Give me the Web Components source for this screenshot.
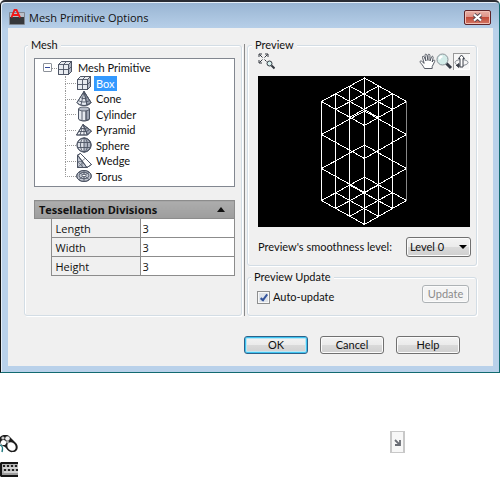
<!DOCTYPE html>
<html lang="en">
<head>
<meta charset="utf-8">
<title>Mesh Primitive Options</title>
<style>
body{margin:0;background:#fff;color:#111;font:11px/14px Lato,"Liberation Sans",Arial,sans-serif}
</style>
</head>
<body>
<mesh-page></mesh-page>
<script>
const define=(name,html,setup)=>customElements.define(name,class extends HTMLElement{
  constructor(){super();this.attachShadow({mode:'open'}).innerHTML=html;}
  connectedCallback(){if(setup)setup(this,this.shadowRoot);}
});

const cube='<path d="M1.500 4.500 4.500 1.500h10v10l-3 3h-10z" fill="#e8ebf0"/><path d="M11.500 4.500l3-3v10l-3 3z" fill="#aeb4c1"/><path d="M1.500 4.500 4.500 1.500h10v10l-3 3h-10zM1.500 4.500h10l3-3M11.500 4.500v10M6.500 14.500v-10l3-3M1.500 9.500h10l3-3"/>';
const ICONS={
 cube,
 cone:'<path d="M8 .5 1 11.5c1 2 4 3 7 3s6-1 7-3z" fill="#e4e8ef"/><path d="M8 .5 11 14l4-2.5z" fill="#9aa1b0"/><path d="M8 .5 1 11.5c1 2 4 3 7 3s6-1 7-3L8 .5 5 14M8 .5 11 14M4.500 6.500c2 1.500 5 1.500 7 0M2.500 9.500c3 2 8 2 11 0"/>',
 cylinder:'<path d="M2.500 3v10c2 2.500 9 2.500 11 0V3z" fill="#e4e8ef"/><path d="M10 4.500v10l3.500-1.500V3z" fill="#9aa1b0"/><ellipse cx="8" cy="3" rx="5.500" ry="2" fill="#b9bfca"/><path d="M2.500 3v10c2 2.500 9 2.500 11 0V3M6 5v9.500M10 5v9.500"/>',
 pyramid:'<path d="M7 2.500.5 13h11z" fill="#eef0f4"/><path d="M7 2.500 11.500 13l4-4z" fill="#9aa1b0"/><path d="M7 2.500.5 13h11l4-4zL11.500 13M4.500 6.500h5l2-1M2.500 9.500h8l3-2M6 6.500 4 13M8 6.500V13"/>',
 sphere:'<circle cx="8" cy="8" r="7" fill="#dfe3ea"/><path d="M8 1a7 7 0 0 1 0 14z" fill="#b0b6c3"/><circle cx="8" cy="8" r="7"/><ellipse cx="8" cy="8" rx="3.500" ry="7"/><path d="M1.500 5.500h13M1.500 10.500h13"/>',
 wedge:'<path d="M1.500 2v12.500H11z" fill="#c1c6d1"/><path d="M1.500 2 4.500.5l11 11-4.500 3z" fill="#fff"/><path d="M1.500 2v12.500H11zM1.500 2l3-1.500 11 11-4.500 3"/><path d="M1.500 8.500H6M6 8v6.500M1.500 14.500l6-5.500M1.500 8.500l6 6M6 8l3-2.500" stroke-width=".6"/>',
 torus:'<ellipse cx="8" cy="8" rx="7.300" ry="5.500" fill="#c4c9d3"/><ellipse cx="8" cy="8" rx="7.300" ry="5.500"/><ellipse cx="8" cy="7.500" rx="4.800" ry="3.200"/><ellipse cx="8" cy="7.500" rx="2" ry="1.200" fill="#fff"/><path d="M8 2.500v3.500M8 9v4.500M3 4.500l3.500 2M13 4.500l-3.500 2M3 11.500l3.500-3M13 11.500l-3.500-3"/>'
};
define('shape-icon','<style>:host{display:block;width:16px;height:16px}svg{display:block;fill:none;stroke:#4c5463;stroke-width:.9}</style><svg width="16" height="16" viewBox="0 0 16 16" aria-hidden="true"></svg>',
 (h,r)=>{r.querySelector('svg').innerHTML=ICONS[h.getAttribute('shape')];});

define('tree-item',`<style>
:host{flex:1;display:flex;align-items:center;min-height:0;position:relative;padding-left:41px}
:host([root]){padding-left:22px}
:host::before{content:"";position:absolute;left:30px;top:0;width:10px;height:50%;border-left:1px dotted #999;border-bottom:1px dotted #999}
:host(:not([last]))::after{content:"";position:absolute;left:30px;top:50%;bottom:0;border-left:1px dotted #999}
:host([root])::before{left:17px;width:5px;border-left:0}
:host([root])::after{display:none}
.t{margin-left:2px;padding:0 2px;line-height:15px}
:host([root]) .t{margin-left:3px}
:host([selected]) .t{background:#3399ff;color:#fff}
button{position:absolute;left:8px;top:3px;width:9px;height:9px;padding:0;border:1px solid #8c9199;border-radius:1px;background:#fff}
button::before{content:"";position:absolute;left:1px;top:3px;width:5px;height:1px;background:#334a9c}
:host(:not([root])) button{display:none}
</style><button aria-label="Collapse"></button><shape-icon></shape-icon><span class="t"><slot></slot></span>`,
 (h,r)=>{h.setAttribute('role','treeitem');r.querySelector('shape-icon').remove();
 const i=document.createElement('shape-icon');i.setAttribute('shape',h.getAttribute('icon'));r.querySelector('.t').before(i);});

define('shape-tree',`<style>:host{display:flex;flex-direction:column;box-sizing:border-box;height:129px;padding:1px 0 2px;border:1px solid #828790;background:#fff}</style><slot></slot>`,
 h=>h.setAttribute('role','tree'));

define('group-box',`<style>:host{display:block}
fieldset{box-sizing:border-box;height:100%;min-width:0;margin:0;padding:var(--pad);border:1px solid #d3dde5;border-radius:3px;box-shadow:inset 1px 1px #fff,1px 1px #fff}
legend{margin-left:-6px;padding:0 3px;background:#f0f0f0;line-height:14px}
</style><fieldset><legend><slot name="title"></slot></legend><slot></slot></fieldset>`);

define('push-button',`<style>:host{display:block}
button{box-sizing:border-box;width:var(--w,64px);height:18px;padding:0;border:1px solid #707070;border-radius:3px;background:linear-gradient(#f3f3f3,#ebebeb 48%,#dadada 50%,#cfcfcf);box-shadow:inset 0 0 0 1px #fbfbfb;color:inherit;font:inherit;line-height:14px}
:host([primary]) button{border-color:#2c628b;box-shadow:inset 0 0 0 1px #3fc4f0,inset 0 0 0 2px #b9e6f5}
:host([disabled]) button{border-color:#adb2b5;background:#f4f4f4;color:#8b8b8b}
</style><button type="button"><slot></slot></button>`,
 (h,r)=>{r.querySelector('button').disabled=h.hasAttribute('disabled');});

define('division-table',`<style>:host{display:block}
table{width:100%;border-collapse:collapse;font:11px/15px "Open Sans","Noto Sans",sans-serif}
th,td{border:1px solid #8c8c8c;padding:0;height:18px;text-align:left;font-weight:400}
thead th{height:17px;background:linear-gradient(#adadad,#9d9d9d);font:bold 11px/15px "Open Sans",sans-serif}
thead div{display:flex;align-items:center;justify-content:space-between;padding:0 9px 0 4px}
thead button{padding:0;border:0;width:8px;height:5px;background:#111;clip-path:polygon(50% 0,100% 100%,0 100%)}
tbody td:first-child{width:16px;border:0}
tbody th{width:84px;padding-left:4px}
td:last-child{background:#fff}
input{display:block;box-sizing:border-box;width:100%;height:18px;border:0;padding:0 2px;background:none;font:11px/15px "Open Sans",sans-serif;color:inherit}
</style><table><thead><tr><th colspan="3"><div>Tessellation Divisions<button aria-label="Collapse section"></button></div></th></tr></thead>
<tbody><tr><td></td><th><label for="l">Length</label></th><td><input id="l" value="3"></td></tr>
<tr><td></td><th><label for="w">Width</label></th><td><input id="w" value="3"></td></tr>
<tr><td></td><th><label for="h">Height</label></th><td><input id="h" value="3"></td></tr></tbody></table>`);

define('preview-tools',`<style>:host{display:flex;height:18px;margin-bottom:6px;align-items:center}
button{display:block;padding:0;border:0;width:17px;height:17px;background:none}
.first{margin-right:auto}.on{box-shadow:inset 1px 1px #999,inset -1px -1px #fff;background:#f7f7f7}svg{display:block}
</style>
<button class="first" aria-label="Zoom extents"><svg width="17" height="17" viewBox="0 0 17 17" fill="none" stroke="#343941"><path d="M1 4V1h3M7 1h3v3M1 7v3h3M1.500 1.500l3 3M9.500 1.500l-3 3M1.500 9.500l3-3M6.500 6.500l2 2"/><circle cx="11.500" cy="10.500" r="2.500" fill="#d6f0ef"/><path d="m13.500 12.500 3 3" stroke-width="2"/></svg></button>
<button aria-label="Pan"><svg width="17" height="17" viewBox="0 0 17 17"><path d="M5.500 15.500C4 12.500 2.500 11 1.200 9.300c-.7-1.200.8-1.700 1.700-.9l2.300 2L3.500 4.500c-.4-1.600 1.200-1.800 1.700-.5L7 8 6 2.500C5.800.8 7.500.7 7.900 2.200L9 7.500V2.300C9 .8 10.800.8 10.900 2.300L11 8l1.500-4c.5-1.300 2-.8 1.600.7L13.200 9l1-1.500c.8-1 2-.2 1.500 1l-2.500 5v2z" fill="#fff" stroke="#454b56" stroke-width=".9"/></svg></button>
<button aria-label="Zoom"><svg width="17" height="17" viewBox="0 0 17 17"><path d="m10 10 5 5" stroke="#353a45" stroke-width="3"/><circle cx="6.500" cy="6.500" r="5.500" fill="#d3ece9" stroke="#8a9298"/><path d="M3.500 6.500a3 3 0 0 1 3-3" fill="none" stroke="#fff" stroke-width="2"/></svg></button>
<button class="on" aria-label="Orbit"><svg width="17" height="17" viewBox="0 0 17 17" fill="none"><ellipse cx="8.500" cy="9.500" rx="6.500" ry="3" stroke="#858b93"/><path d="M8.500 2 11.500 5.500H10V14H7V5.500H5.500z" fill="#fff" stroke="#3c414a"/><path d="M3 12.500h3M6 10.500v4l-2.500-2z" fill="#3c414a" stroke="#3c414a"/></svg></button>`);

define('wire-preview',`<style>:host{display:flex;justify-content:center;height:151px;background:#000}svg{display:block}</style>
<svg width="86" height="151" viewBox="0 0 86 151" fill="none" stroke="#fff" shape-rendering="crispEdges" role="img" aria-label="Box preview">
<defs><path id="r" d="M.5 25.500 43.500 2l42 23.500-42 24z"/>
<path id="g" d="M.5 25.500 43.500 2M14.500 33.500l43-23.500M28.500 41.500l43-24M43.500 49.500l42-24M.5 25.500l43 24M14.500 17.500l43 24M28.500 10l43 23.500M43.500 2l42 23.500"/></defs>
<use href="#g"/><use href="#r" y="33"/><use href="#r" y="67"/><use href="#g" y="99"/>
<path d="M.5 25v100M14.500 17v116M28.500 10v131M43.500 1v148M57.500 10v131M71.500 17v116"/><path d="M85.500 25v100" stroke="#888"/></svg>`);

define('smoothness-picker',`<style>:host{display:flex;justify-content:space-between;align-items:center;margin-top:10px}
span{position:relative;display:block;margin-right:-1px}
select{appearance:none;box-sizing:border-box;display:block;width:65px;height:20px;margin:0;padding:0 3px;border:1px solid #707070;border-radius:3px;background:linear-gradient(#f3f3f3,#ebebeb 48%,#dadada 50%,#cfcfcf);box-shadow:inset 0 0 0 1px #fbfbfb;color:inherit;font:inherit}
span::after{content:"";position:absolute;right:4px;top:8px;border:4px solid transparent;border-top-color:#000;border-bottom:0;pointer-events:none}
</style><label for="s">Preview's smoothness level:</label><span><select id="s"><option>Level 0</option><option>Level 1</option><option>Level 2</option></select></span>`);

define('auto-update',`<style>:host{display:flex;justify-content:space-between;align-items:flex-start}
label{display:flex;align-items:center;gap:3px;margin-top:5px}
input{appearance:none;box-sizing:border-box;width:13px;height:13px;margin:0;border:1px solid #8e8f8f;background:#dfe4ea;box-shadow:inset 0 0 0 1px #f8f8f8;position:relative}
input:checked::after{content:"";position:absolute;left:4px;top:1px;width:2px;height:6px;border:solid #34549c;border-width:0 2px 2px 0;transform:rotate(38deg)}
</style><label><input type="checkbox" checked>Auto-update</label><push-button disabled style="--w:47px">Update</push-button>`);

define('dialog-window',`<style>:host{display:block;box-sizing:border-box;border:1px solid #111;border-bottom-color:#126a70;border-right-color:#126a70;border-top:2px solid #2a2c33;border-radius:5px 5px 0 0;background:linear-gradient(#98b4d2,#b9d1ea 28px);padding:0 6px 6px;box-shadow:inset 1px 1px #e5eef7}
header{display:flex;align-items:center;height:26px;padding:0 2px}
h1{margin:0 auto 0 4px;padding-top:5px;font:11px/16px "Open Sans","Noto Sans",sans-serif}
header svg.logo{margin-top:5px}
button{width:27px;height:15px;margin-top:4px;padding:0;border:1px solid #5e2328;border-radius:2px;background:linear-gradient(#e9b0a6,#dd9186 48%,#c24b3a 50%,#d37765);box-shadow:inset 0 0 0 1px #f0bfb5;display:flex;align-items:center;justify-content:center}
main{margin-left:1px;background:#f0f0f0;padding:10px 16px 12px}
</style><header><svg class="logo" width="16" height="17" viewBox="0 0 16 17" aria-hidden="true"><path d="M.5 3.500h15v12H.5z" fill="#b9bfc8" stroke="#80868f"/><path d="M1 8h14v7H1z" fill="#36383b"/><path d="m2.500 8.500 3-7.500h2l3.500 7.500M4 6h5.500" fill="none" stroke="#f01818" stroke-width="1.800"/></svg><h1><slot name="title"></slot></h1>
<button aria-label="Close"><svg width="11" height="9" viewBox="0 0 11 9"><path d="m2 1.500 7 6m0-6-7 6" stroke="#564850" stroke-width="4"/><path d="m2 1.500 7 6m0-6-7 6" stroke="#fff" stroke-width="2.200"/></svg></button></header><main><slot></slot></main>`);

define('page-notes',`<style>:host{display:block;margin-top:58px}
div{display:flex;justify-content:space-between;height:22px;margin-right:95px}
button{width:15px;height:22px;padding:0;border:1px solid #c8c8c8;border-width:1px 2px;background:#f7f7f7;display:flex;align-items:center;justify-content:center}
svg{display:block}.mouse{margin-top:4px}.keys{margin-top:9px}
</style><div><svg class="mouse" width="18" height="18" viewBox="0 0 18 18" aria-label="Mouse"><path d="M0 2C3-1 8-1 10 2l6 6c3 3 2 9-3 9-4 1-6-3-8-5-3-1-5-3-5-6z" fill="#1c1c1c"/><path d="M0 10c3 1 3 3 2 7" fill="none" stroke="#247c82" stroke-width="1.500"/><circle cx="3.500" cy="7.500" r="2.600" fill="#fff"/><circle cx="7.500" cy="3.500" r="2.300" fill="#eee"/><circle cx="3" cy="3" r="1.600" fill="#ccc"/><circle cx="7.500" cy="7" r="1.500" fill="#aaa"/><ellipse cx="11.500" cy="11.500" rx="4.600" ry="3.800" transform="rotate(45 11.500 11.500)" fill="#fff"/></svg>
<button aria-label="Dialog box launcher"><svg width="7" height="7" viewBox="0 0 7 7"><path d="M1 1l4 4M6 1v5H1" fill="none" stroke="#6a6d74" stroke-width="1.800"/></svg></button></div>
<svg class="keys" width="18" height="15" viewBox="0 0 18 15" aria-label="Keyboard"><path d="M1 0h17v15H1L0 14V1z" fill="#151515"/><path d="M2 2h16v11H2z" fill="#b4b4b4"/><path d="M3 4h15M4 8h14" stroke="#222" stroke-width="2" stroke-dasharray="2 2"/><path d="M3 6h15M4 10h14" stroke="#eee"/><path d="M2 12h16" stroke="#888"/></svg>`);

define('mesh-page',`<style>:host{display:block}
.cols{display:grid;grid-template-columns:218fr 1px 230fr;column-gap:2px}
.rule{margin-top:6px;background:#8a8a8a}
.left{--pad:6px 6px 8px 9px}.preview{--pad:0 6px 8px 10px}.update{--pad:1px 7px 11px 9px;margin-top:4px}
division-table{margin-top:13px}
footer{display:flex;justify-content:flex-end;gap:12px;margin:20px 17px 0 0}
</style><dialog-window><span slot="title">Mesh Primitive Options</span>
<div class="cols"><group-box class="left"><span slot="title">Mesh</span>
<shape-tree><tree-item root icon="cube">Mesh Primitive</tree-item><tree-item selected icon="cube">Box</tree-item><tree-item icon="cone">Cone</tree-item><tree-item icon="cylinder">Cylinder</tree-item><tree-item icon="pyramid">Pyramid</tree-item><tree-item icon="sphere">Sphere</tree-item><tree-item icon="wedge">Wedge</tree-item><tree-item last icon="torus">Torus</tree-item></shape-tree>
<division-table></division-table></group-box>
<div class="rule"></div>
<div><group-box class="preview"><span slot="title">Preview</span><preview-tools></preview-tools><wire-preview></wire-preview><smoothness-picker></smoothness-picker></group-box>
<group-box class="update"><span slot="title">Preview Update</span><auto-update></auto-update></group-box></div></div>
<footer><push-button primary>OK</push-button><push-button>Cancel</push-button><push-button>Help</push-button></footer>
</dialog-window><page-notes></page-notes>`);
</script>
</body>
</html>
